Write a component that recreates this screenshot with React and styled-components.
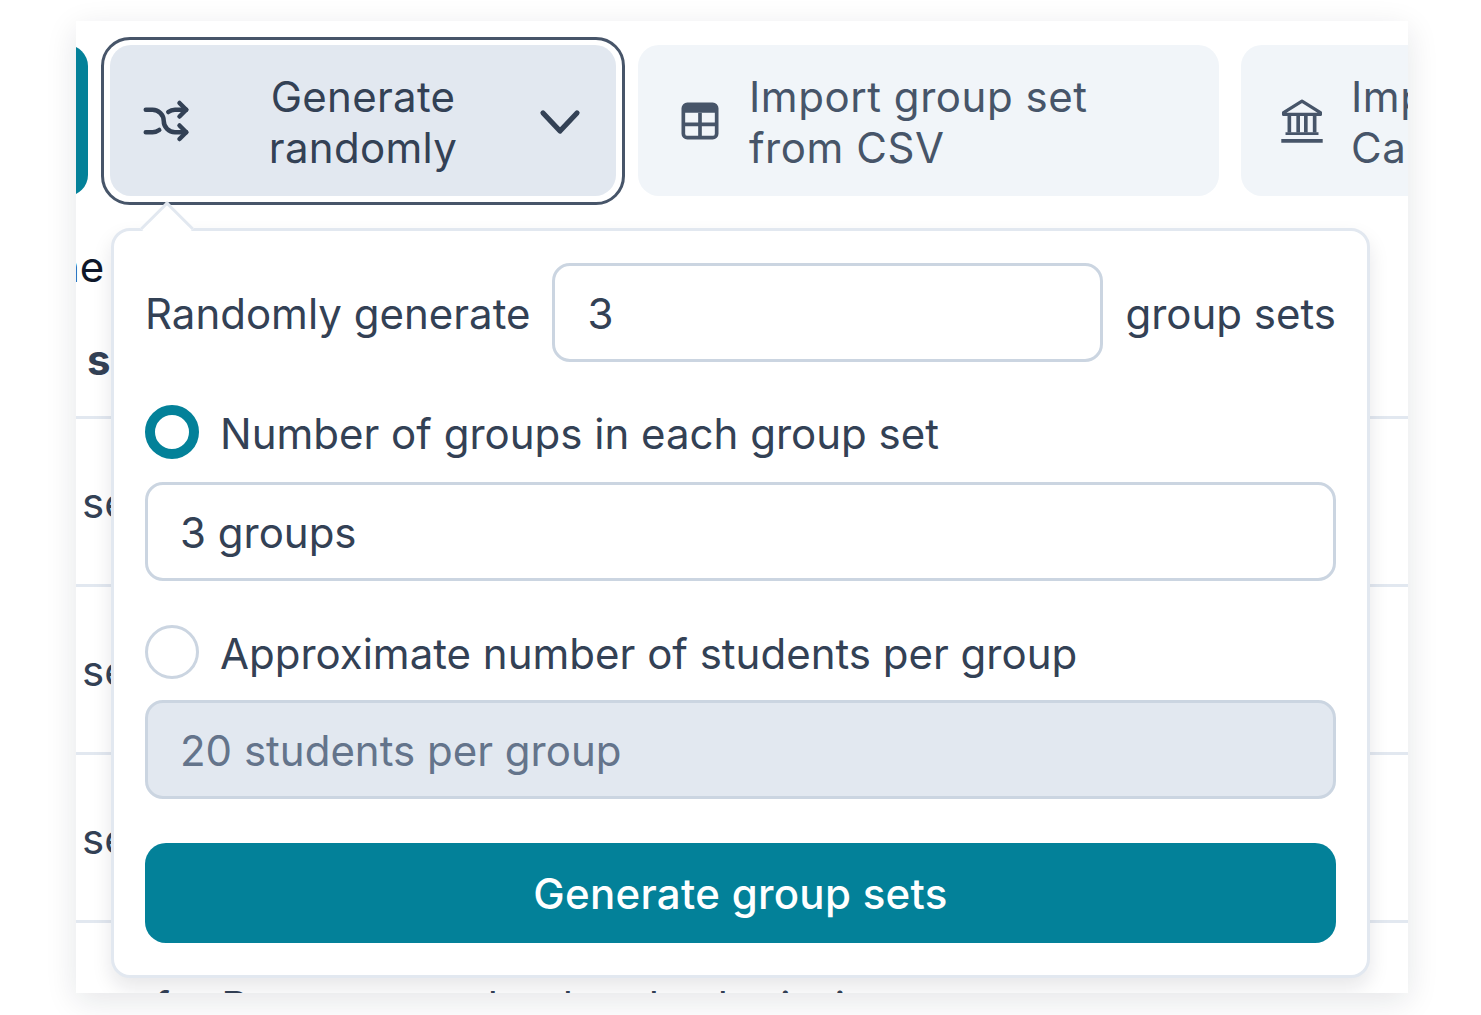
import React from "react";
import styled, { createGlobalStyle } from "styled-components";

const GlobalStyle = createGlobalStyle`
  body {
    margin: 0;
    background: #fff;
    font-family: Inter, "Liberation Sans", sans-serif;
  }
`;

const Page = styled.div`
  width: 1481px;
  height: 1015px;
  padding: 21px 73px 22px 76px;
  box-sizing: border-box;
  overflow: hidden;
`;

const Frame = styled.div`
  position: relative;
  height: 100%;
  background: #fff;
  overflow: hidden;
`;

const Shadow = styled.div`
  height: 100%;
  box-shadow: 0 8px 30px rgba(15, 23, 42, 0.11);
`;

const Toolbar = styled.div`
  display: flex;
  gap: 22px;
  padding-top: 24px;
  height: 151px;
  margin-left: -472px;
  width: 2400px;
`;

const ActionButton = styled.div`
  position: relative;
  flex: none;
  width: ${(p) => p.$width}px;
  height: 151px;
  box-sizing: border-box;
  display: flex;
  align-items: center;
  gap: ${(p) => p.$gap || 30}px;
  padding: 0 ${(p) => p.$padRight || 32}px 0 ${(p) => p.$padLeft || 32}px;
  border-radius: 21px;
  background: ${(p) => p.$bg};
  color: ${(p) => p.$color};
  font-size: 42px;
  letter-spacing: ${(p) => p.$tracking || 0.3}px;
  line-height: 51px;
  text-align: ${(p) => p.$align || "left"};
  ${(p) =>
    p.$focused &&
    `
    &::after {
      content: "";
      position: absolute;
      inset: -8px -9px -9px;
      border: 3px solid #475569;
      border-radius: 29px;
    }
  `}
`;

const ButtonLabel = styled.span`
  flex: 1;
  padding-top: 2px;
  white-space: pre-line;
`;

const Rows = styled.div`
  padding-top: 45px;
  color: #334155;
  font-size: 42px;
`;

const HeaderText = styled.div`
  height: ${(p) => p.$height}px;
  margin-left: ${(p) => p.$left}px;
  color: ${(p) => p.$color};
  font-weight: ${(p) => p.$weight};
  line-height: 51px;
`;

const Row = styled.div`
  height: 168px;
  box-sizing: border-box;
  border-top: 3px solid #e2e8f0;
  padding: 58px 0 0 6px;
  line-height: 51px;
`;

const Popover = styled.div`
  position: absolute;
  left: 35px;
  top: 207px;
  width: 1259px;
  height: 750px;
  box-sizing: border-box;
  padding: 32px 31px;
  background: #fff;
  border: 3px solid #e2e8f0;
  border-radius: 19px;
  box-shadow: 0 10px 20px rgba(15, 23, 42, 0.1);
  color: #334155;
  font-size: 42px;
  &::before {
    content: "";
    position: absolute;
    left: 34px;
    top: -22px;
    width: 38px;
    height: 38px;
    background: #fff;
    border-left: 3px solid #e2e8f0;
    border-top: 3px solid #e2e8f0;
    box-sizing: border-box;
    transform: rotate(45deg);
  }
`;

const CountRow = styled.div`
  position: relative;
  display: flex;
  align-items: center;
  gap: 22px;
  height: 99px;
`;

const RowText = styled.span`
  padding-top: 2px;
`;

const Field = styled.div`
  box-sizing: border-box;
  flex: 1;
  height: 99px;
  display: flex;
  align-items: center;
  padding: 2px 0 0 32px;
  border: 3px solid #cbd5e1;
  border-radius: 18px;
  background: ${(p) => (p.$disabled ? "#e2e8f0" : "#fff")};
  color: ${(p) => (p.$disabled ? "#64748b" : "#334155")};
`;

const RadioRow = styled.div`
  display: flex;
  align-items: center;
  gap: 21px;
  height: 54px;
  margin: ${(p) => p.$top}px 0 ${(p) => p.$bottom}px;
`;

const Radio = styled.span`
  flex: none;
  width: 54px;
  height: 54px;
  box-sizing: border-box;
  border-radius: 50%;
  background: #fff;
  border: ${(p) => (p.$checked ? "10px solid #038199" : "3px solid #cbd5e1")};
`;

const SubmitButton = styled.div`
  height: 100px;
  margin-top: 44px;
  display: flex;
  align-items: center;
  justify-content: center;
  background: #038199;
  color: #fff;
  font-weight: 500;
  letter-spacing: 0.3px;
  border-radius: 21px;
`;

const ShuffleSvg = styled.svg`
  flex: none;
  margin-right: -3px;
`;

const ShuffleIcon = () => (
  <ShuffleSvg width="54" height="54" viewBox="0 0 24 24" fill="none" stroke="currentColor" strokeWidth="2" strokeLinecap="round" strokeLinejoin="round">
    <path d="M18 4l3 3l-3 3" />
    <path d="M18 20l3 -3l-3 -3" />
    <path d="M3 7h3a5 5 0 0 1 5 5a5 5 0 0 0 5 5h5" />
    <path d="M21 7h-5a4.98 4.98 0 0 0 -3 1m-4 8a4.98 4.98 0 0 1 -3 1h-3" />
  </ShuffleSvg>
);

const ChevronIcon = () => (
  <svg width="48" height="48" viewBox="0 0 24 24" fill="none" stroke="currentColor" strokeWidth="2.6" strokeLinecap="round" strokeLinejoin="round">
    <path d="m3.5 8 8.5 9 8.5-9" />
  </svg>
);

const TableIcon = () => (
  <svg width="40" height="40" viewBox="0 0 24 24" fill="none">
    <path fill="currentColor" d="M2 7V4.4A2.4 2.4 0 0 1 4.4 2h15.2A2.4 2.4 0 0 1 22 4.4V7z" />
    <rect x="2" y="2" width="20" height="20" rx="2.4" stroke="currentColor" strokeWidth="2.2" />
    <path d="M2 14h20M12 7v15" stroke="currentColor" strokeWidth="2.2" />
  </svg>
);

const BankIcon = () => (
  <svg width="46" height="46" viewBox="0 0 24 24" fill="none" stroke="currentColor" strokeWidth="1.7" strokeLinejoin="round">
    <path d="M12 1.6 2.4 7.6v1h19.2v-1z" />
    <path d="M5.4 9v9M10 9v9M14 9v9M18.6 9v9" strokeWidth="1.9" />
    <path d="M3.4 18.6h17.2" strokeWidth="1.5" />
    <path d="M1.2 22.4h21.6" strokeWidth="2" />
  </svg>
);

const App = () => (
  <>
    <GlobalStyle />
    <Page>
      <Shadow>
        <Frame>
          <Toolbar>
            <ActionButton $width="484" $bg="#038199" $color="#fff" />
            <ActionButton $width="506" $bg="#e2e8f0" $color="#334155" $align="center" $focused $gap="10" $padLeft="29">
              <ShuffleIcon />
              <ButtonLabel>{"Generate\nrandomly"}</ButtonLabel>
              <ChevronIcon />
            </ActionButton>
            <ActionButton $width="581" $bg="#f1f5f9" $color="#475569" $padLeft="42" $gap="29" $tracking="0.55">
              <TableIcon />
              <ButtonLabel>{"Import group set\nfrom CSV"}</ButtonLabel>
            </ActionButton>
            <ActionButton $width="500" $bg="#f1f5f9" $color="#475569" $padLeft="38" $gap="26" $tracking="0.55">
              <BankIcon />
              <ButtonLabel>{"Import group set\nCanvas"}</ButtonLabel>
            </ActionButton>
          </Toolbar>
          <Rows>
            <HeaderText $left="-21" $height="93" $color="#0f172a" $weight="400">ne</HeaderText>
            <HeaderText $left="11" $height="82" $color="#334155" $weight="700">s</HeaderText>
            <Row>se</Row>
            <Row>se</Row>
            <Row>se</Row>
            <Row>set for Document upload and submission</Row>
          </Rows>
          <Popover>
            <CountRow>
              <RowText>Randomly generate</RowText>
              <Field>3</Field>
              <RowText>group sets</RowText>
            </CountRow>
            <RadioRow $top="43" $bottom="23">
              <Radio $checked />
              <RowText>Number of groups in each group set</RowText>
            </RadioRow>
            <Field>3 groups</Field>
            <RadioRow $top="44" $bottom="21">
              <Radio />
              <RowText>Approximate number of students per group</RowText>
            </RadioRow>
            <Field $disabled>20 students per group</Field>
            <SubmitButton>Generate group sets</SubmitButton>
          </Popover>
        </Frame>
      </Shadow>
    </Page>
  </>
);

export default App;
